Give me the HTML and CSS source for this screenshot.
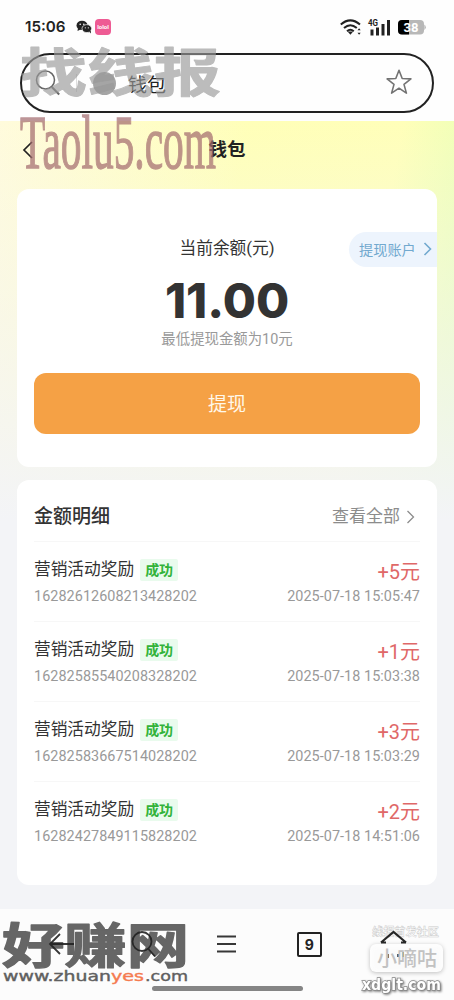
FILE: index.html
```html
<!DOCTYPE html>
<html lang="zh-CN">
<head>
<meta charset="utf-8">
<title>钱包</title>
<link rel="stylesheet" href="styles.css">
</head>
<body>
<div class="screen">
  <header class="status">
    <span class="time">15:06</span>
    <svg class="wechat" width="16" height="14" viewBox="0 0 16 14"><ellipse cx="6" cy="5.4" rx="5.5" ry="4.7" fill="#222"/><path d="M2 8l-.5 3 3-1.5z" fill="#222"/><ellipse cx="10.8" cy="8.6" rx="4.8" ry="4" fill="#222" stroke="#fff" stroke-width=".7"/><path d="M13 11.5l2 2-.3-3z" fill="#222"/><g fill="#fff"><circle cx="4.2" cy="4.3" r=".8"/><circle cx="7.8" cy="4.3" r=".8"/><circle cx="9.3" cy="7.8" r=".6"/><circle cx="12.3" cy="7.8" r=".6"/></g></svg>
    <span class="app">lolol</span>
    <span class="grow"></span>
    <svg class="wifi" width="22" height="17" viewBox="0 0 22 17" fill="none" stroke="#222" stroke-width="2"><path d="M.8 5.5Q10.3-2.8 20 5.5M4 9Q10.3 3.4 16.8 9M7 12.2q3.3-3 6.8 0" /><path d="M7.6 12.4h5.6l-2.8 3.4z" fill="#222" stroke="none"/><path d="M17.5 11.2l1.6-2 1.6 2zm0 2.6l1.6 2 1.6-2z" fill="#222" stroke="none"/></svg>
    <svg class="signal" width="24" height="17" viewBox="0 0 24 17"><text x="1" y="7" class="net" textLength="10" lengthAdjust="spacingAndGlyphs">4G</text><g fill="#222"><rect x="3.5" y="10.5" width="3" height="6"/><rect x="9" y="8.5" width="3" height="8"/><rect x="14.5" y="5" width="3" height="11.500"/><rect x="20" y="1" width="3" height="15.500"/></g></svg>
    <svg class="battery" width="28" height="15" viewBox="0 0 28 15"><rect x="0" y="0" width="26" height="14.500" rx="4" fill="#b8b8b8"/><path d="M4 0h7v14.500H4a4 4 0 0 1-4-4V4a4 4 0 0 1 4-4z" fill="#000"/><path d="M26.300 4.500q3 2.700 0 5.500z" fill="#b8b8b8"/><text x="5.500" y="11.800" class="charge" textLength="15" lengthAdjust="spacingAndGlyphs">38</text></svg>
  </header>

  <div class="search">
    <svg class="lens" width="26" height="26" viewBox="0 0 26 26" fill="none" stroke="#666" stroke-width="1.500"><circle cx="10.500" cy="10" r="9"/><path d="M16.800 17l7.400 7.500" stroke-width="2"/></svg>
    <span class="rule"></span>
    <span class="favicon"></span>
    <span class="query">钱包</span>
    <svg class="star" width="26" height="26" viewBox="0 0 26 26" fill="none" stroke="#737373" stroke-width="1.600" stroke-linejoin="round"><path d="M13 1.300l3.200 8.200 8.700.4-6.900 5.500 2.400 8.700-7.400-4.900-7.400 4.900 2.400-8.700-6.900-5.500 8.700-.4z"/></svg>
  </div>

  <main class="page">
    <nav class="nav">
      <svg class="back" width="12" height="20" viewBox="0 0 12 20" fill="none" stroke="#222" stroke-width="1.700"><path d="M11 2L3 10l8 8"/></svg>
      <h1 class="title">钱包</h1>
    </nav>

    <section class="card balance">
      <a class="account">提现账户<svg width="9" height="14" viewBox="0 0 9 14" fill="none" stroke="#72a9cf" stroke-width="1.600"><path d="M1.500 1l6 6-6 6"/></svg></a>
      <div class="label">当前余额(元)</div>
      <div class="amount">11.00</div>
      <div class="hint">最低提现金额为10元</div>
      <button class="withdraw">提现</button>
    </section>

    <section class="card details">
      <div class="head"><h2 class="heading">金额明细</h2><a class="all">查看全部<svg width="9" height="14" viewBox="0 0 9 14" fill="none" stroke="#8c8c8c" stroke-width="1.300"><path d="M1.500 1l6 6-6 6"/></svg></a></div>
      <div class="row"><div class="left"><div class="name">营销活动奖励<span class="tag">成功</span></div><div class="meta">16282612608213428202</div></div><div class="right"><div class="gain">+5元</div><div class="meta">2025-07-18 15:05:47</div></div></div>
      <div class="row"><div class="left"><div class="name">营销活动奖励<span class="tag">成功</span></div><div class="meta">16282585540208328202</div></div><div class="right"><div class="gain">+1元</div><div class="meta">2025-07-18 15:03:38</div></div></div>
      <div class="row"><div class="left"><div class="name">营销活动奖励<span class="tag">成功</span></div><div class="meta">16282583667514028202</div></div><div class="right"><div class="gain">+3元</div><div class="meta">2025-07-18 15:03:29</div></div></div>
      <div class="row"><div class="left"><div class="name">营销活动奖励<span class="tag">成功</span></div><div class="meta">16282427849115828202</div></div><div class="right"><div class="gain">+2元</div><div class="meta">2025-07-18 14:51:06</div></div></div>
    </section>
  </main>

  <footer class="toolbar">
    <svg class="tool" width="28" height="28" viewBox="0 0 28 28" fill="none" stroke="#222" stroke-width="1.800"><path d="M28 14H4M14 4L4 14l10 10"/></svg>
    <svg class="tool" width="28" height="28" viewBox="0 0 28 28" fill="none" stroke="#222" stroke-width="1.800"><circle cx="12" cy="11.500" r="9.500"/><path d="M18 18.500l7 8"/></svg>
    <svg class="tool" width="28" height="28" viewBox="0 0 28 28" stroke="#222" stroke-width="1.800"><path d="M4 6.500h19M4 14h19M4 21.500h19"/></svg>
    <span class="tabs">9</span>
    <svg class="tool" width="28" height="28" viewBox="0 0 28 28" fill="none" stroke="#111" stroke-width="2.200"><path d="M2 12.500L14.500 2 27 12.500M2 12.500h5M22 12.500h5"/></svg>
    <span class="indicator"></span>
  </footer>

  <svg class="mark mark-top" width="240" height="140" viewBox="0 0 240 140">
    <text x="20" y="51.500" class="brush" textLength="201" lengthAdjust="spacingAndGlyphs">找线报</text>
    <g transform="translate(20 127.500) scale(1 1.950)"><text x="0" y="0" class="domain" textLength="196" lengthAdjust="spacingAndGlyphs">Taolu5.com</text></g>
  </svg>
  <svg class="mark mark-left" width="200" height="84" viewBox="0 0 200 84">
    <text x="2" y="46.500" class="logo" textLength="187" lengthAdjust="spacingAndGlyphs">好赚网</text>
    <text x="3" y="65" class="url" textLength="108" lengthAdjust="spacingAndGlyphs">www.zhuan</text>
    <text x="111" y="65" class="url accent" textLength="33" lengthAdjust="spacingAndGlyphs">yes</text>
    <text x="145" y="65" class="url" textLength="43" lengthAdjust="spacingAndGlyphs">.com</text>
  </svg>
  <svg class="mark mark-right" width="104" height="84" viewBox="0 0 104 84">
    <text x="22" y="20" class="slogan" textLength="67" lengthAdjust="spacingAndGlyphs">线报首发社区</text>
    <rect x="20" y="28" width="73" height="28" rx="6" class="plate"/>
    <path d="M38 38v4M48 38v3M53 36v5" stroke="#222" stroke-width="1.800" opacity=".8"/>
    <text x="27" y="50" class="nick" textLength="60" lengthAdjust="spacingAndGlyphs">小嘀咕</text>
    <text x="12" y="74" class="site" textLength="79" lengthAdjust="spacingAndGlyphs">xdglt.com</text>
  </svg>
</div>
</body>
</html>
```
FILE: styles.css
```css
* { box-sizing: border-box; margin: 0; }
body { font-family: Roboto, "Noto Sans CJK SC", sans-serif; color: #333; }
.screen { position: relative; width: 454px; height: 1000px; overflow: hidden; background: #fefefe; display: flex; flex-direction: column; }
.status { height: 53px; flex: none; display: flex; align-items: center; padding: 1px 28px 0 25px; }
.time { font: 600 15.200px/20px Inter, sans-serif; color: #222; width: 50px; white-space: nowrap; }
.wechat { margin-left: 1px; }
.app { width: 16px; height: 16px; margin-left: 3px; border-radius: 4px; background: #ee5b94; color: #fff; font: bold 6px/16px Roboto, sans-serif; text-align: center; }
.grow { flex: 1; }
.signal { margin-left: 5px; }
.battery { margin-left: 7px; }
.net { font: bold 9px Roboto, sans-serif; fill: #222; }
.charge { font: bold 13px Roboto, sans-serif; fill: #fff; }
.search { flex: none; height: 60px; margin: 0 20px 8px; border: 2px solid #222; border-radius: 30px; display: flex; align-items: center; padding: 0 20px 0 13px; }
.star { margin-top: -2px; }
.rule { width: 1px; height: 18px; background: #ddd; margin-left: 15px; }
.favicon { width: 23px; height: 23px; border-radius: 50%; background: #a5a5a5; margin-left: 16px; }
.query { font-size: 19px; line-height: 28px; color: #222; margin-left: 12px; padding-top: 5px; flex: 1; }
.page { flex: none; height: 788px; padding: 0 17px; background: linear-gradient(to bottom, rgba(243, 244, 247, 0) 0, #f3f4f7 400px), linear-gradient(100deg, #fffbdc 0, #ffffb8 42%, #ffffb9 68%, #d9ffb4 94%); }
.nav { height: 68px; display: grid; grid-template-columns: 24px 1fr 24px; align-items: center; padding: 0 4px 10px; }
.title { font-size: 18.500px; line-height: 26px; text-align: center; color: #222; font-weight: 700; }
.card { background: #fff; border-radius: 12px; }
.balance { position: relative; height: 278px; padding: 46px 17px 0; text-align: center; }
.account { position: absolute; right: 0; top: 43px; width: 88px; height: 35px; border-radius: 18px 0 0 18px; background: #edf4fd; color: #72a9cf; font-size: 14.200px; display: flex; align-items: center; gap: 7px; padding: 0 0 1px 10px; white-space: nowrap; }
.label { font-size: 16.700px; line-height: 28px; }
.amount { font: 800 48px/56px Inter, sans-serif; margin-top: 10px; }
.hint { font-size: 14.400px; line-height: 20px; color: #999; margin-top: 1px; }
.withdraw { display: block; width: 386px; height: 61px; border: 0; border-radius: 12px; background: #f5a145; color: #fff8ea; font: 19px Roboto, "Noto Sans CJK SC", sans-serif; margin-top: 23px; padding-bottom: 4px; }
.details { height: 405px; margin-top: 13px; padding: 0 17px; }
.head { height: 61px; display: flex; justify-content: space-between; align-items: center; padding-top: 13px; }
.heading { font-size: 19px; line-height: 28px; font-weight: 500; }
.all { font-size: 17px; line-height: 26px; color: #8c8c8c; display: flex; align-items: center; gap: 6px; padding: 0 5px 2px 0; }
.all svg { margin-top: 2px; }
.row { height: 80px; border-top: 1px solid #f7f7f7; display: flex; justify-content: space-between; }
.left { padding-top: 15px; }
.name { font-size: 16.700px; line-height: 26px; display: flex; align-items: center; }
.tag { width: 38px; height: 22px; margin-left: 6px; background: #e9fbed; color: #32b33a; font-size: 14px; line-height: 22px; font-weight: 700; text-align: center; border-radius: 2px; }
.meta { font-size: 14.400px; line-height: 20px; color: #999; letter-spacing: .06px; margin-top: 4px; }
.right { text-align: right; padding-top: 16px; }
.gain { font-size: 20px; line-height: 28px; color: #df6868; }
.right .meta { margin-top: 1px; }
.toolbar { position: relative; flex: none; height: 91px; background: #fcfcfc; display: flex; justify-content: space-between; align-items: flex-start; padding: 21px 47px 0 46px; }
.tool:nth-child(3) { margin-left: -2px; }
.tool { position: relative; z-index: 2; opacity: .9; }
.tabs { width: 25px; height: 25px; margin: 2px 1px 0 0; border: 2px solid #222; border-radius: 2px; text-align: center; font: 700 14px/21px Inter, sans-serif; color: #222; }
.indicator { position: absolute; left: 152px; top: 77px; width: 151px; height: 5px; border-radius: 3px; background: #858585; }
.mark { position: absolute; pointer-events: none; overflow: visible; }
.mark-top { left: 0; top: 40px; }
.mark-left { left: 0; top: 916px; }
.mark-right { left: 350px; top: 916px; }
.brush { font: 700 52px "Noto Sans CJK SC", sans-serif; fill: #999; stroke: #999; stroke-width: 1; stroke-linejoin: round; opacity: .65; }
.domain { font: 39px "Liberation Serif", serif; fill: #a56d70; stroke: #a56d70; stroke-width: .7; opacity: .72; }
.logo { font: 700 48px "Noto Sans CJK SC", sans-serif; fill: #666; stroke: #666; stroke-width: 1.300; stroke-linejoin: round; }
.url { font: 14px "DejaVu Sans", sans-serif; fill: #606060; stroke: #606060; stroke-width: .4; }
.accent { fill: #f57b50; stroke: #f57b50; }
.slogan { font: 700 11px "Noto Sans CJK SC", sans-serif; fill: #fff; stroke: #ccc; stroke-width: .5; }
.plate { fill: #fff; fill-opacity: .95; filter: drop-shadow(0 1px 2px #bbb); }
.nick { font: 500 20px "Noto Sans CJK SC", sans-serif; fill: #c2c2c2; }
.site { font: 700 15px "DejaVu Sans", sans-serif; fill: #fff; stroke: #888; stroke-width: 1.300; paint-order: stroke; filter: drop-shadow(1px 1px 1px #777); }
```
